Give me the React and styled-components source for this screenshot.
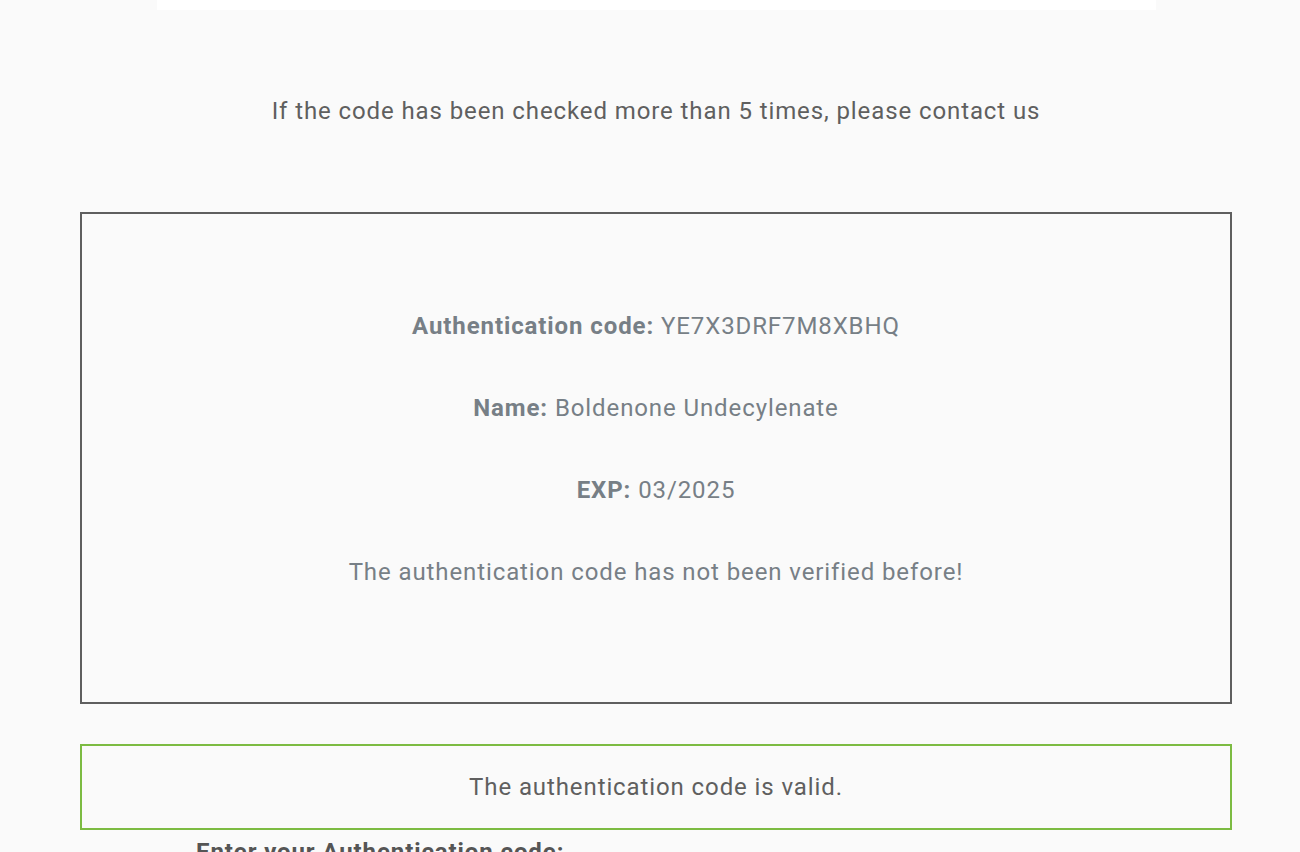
import React from 'react';
import styled, { createGlobalStyle } from 'styled-components';

const GlobalStyle = createGlobalStyle`
  html, body {
    margin: 0;
    padding: 0;
    background: #fafafa;
    font-family: Roboto, "Liberation Sans", Arial, sans-serif;
    letter-spacing: 0.9px;
  }
`;

const Page = styled.main`
  width: 1152px;
  margin-left: 80px;
  overflow: hidden;
  height: 852px;
`;

const TopPanel = styled.div`
  height: 10px;
  margin: 0 76px 0 77px;
  background: #ffffff;
`;

const Notice = styled.p`
  margin: 83px 0 0;
  text-align: center;
  font-size: 24px;
  line-height: 36px;
  color: #5f5f5f;
`;

const ResultCard = styled.section`
  margin-top: 83px;
  height: 492px;
  box-sizing: border-box;
  border: 2px solid #5f5f5f;
  display: flex;
  flex-direction: column;
  align-items: center;
  justify-content: center;
  gap: 46px;
  padding-bottom: 18px;
`;

const InfoLine = styled.p`
  margin: 0;
  font-size: 24px;
  line-height: 36px;
  color: #777f86;
  text-align: center;

  strong {
    font-weight: 700;
  }
`;

const StatusBox = styled.div`
  margin-top: 40px;
  height: 86px;
  box-sizing: border-box;
  border: 2px solid ${(p) => (p.$valid ? '#7cbb42' : '#d9534f')};
  display: flex;
  align-items: center;
  justify-content: center;
  font-size: 24px;
  color: #5f5f5f;
`;

const FormLabel = styled.label`
  display: block;
  margin: 4px 0 0 116px;
  font-size: 24px;
  line-height: 36px;
  font-weight: 700;
  color: #555555;
`;

const details = [
  { label: 'Authentication code:', value: 'YE7X3DRF7M8XBHQ' },
  { label: 'Name:', value: 'Boldenone Undecylenate' },
  { label: 'EXP:', value: '03/2025' },
];

export default function App() {
  return (
    <>
      <GlobalStyle />
      <Page>
        <TopPanel />
        <Notice>If the code has been checked more than 5 times, please contact us</Notice>
        <ResultCard>
          {details.map((d) => (
            <InfoLine key={d.label}>
              <strong>{d.label}</strong> {d.value}
            </InfoLine>
          ))}
          <InfoLine>The authentication code has not been verified before!</InfoLine>
        </ResultCard>
        <StatusBox $valid>The authentication code is valid.</StatusBox>
        <FormLabel>Enter your Authentication code:</FormLabel>
      </Page>
    </>
  );
}
